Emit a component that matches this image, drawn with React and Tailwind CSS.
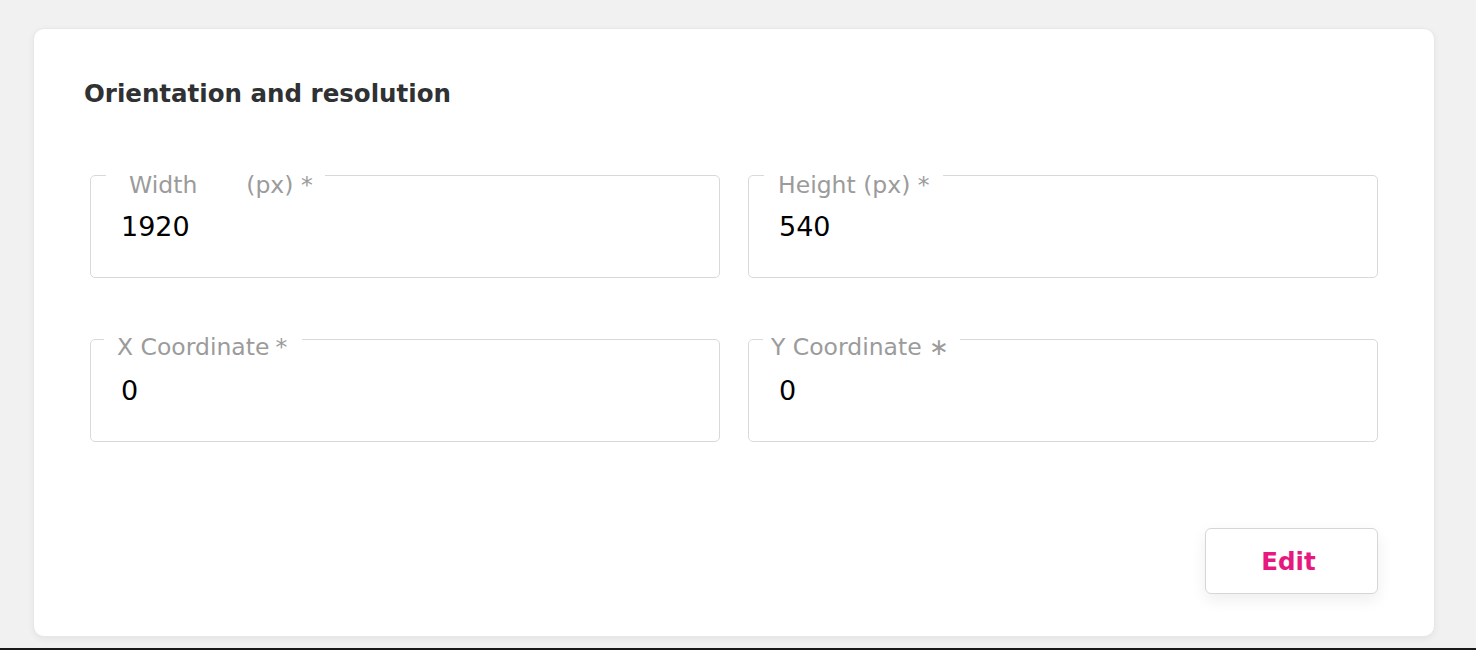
const Field = ({ label, value, legendClass }) => {
  return (
    <fieldset className="h-[124px] rounded-[5px] border border-[#d9d9d9] px-[30px] pb-0 pt-0 m-0 min-w-0">
      <legend className={`text-[23.5px] leading-[24px] text-[#9b9b9b] pt-[18px] ${legendClass}`}>
        {label}
      </legend>
      <div className="mt-[14px] text-[27px] leading-[34px] text-black">{value}</div>
    </fieldset>
  );
};

const App = () => {
  return (
    <div
      className="h-[650px] bg-[#f0f1f0] border-b-2 border-[#1a1a1a] pl-[33px] pr-[41px] pt-[28px]"
      style={{ fontFamily: '"DejaVu Sans", sans-serif' }}
    >
      <div className="h-[609px] rounded-[11px] bg-white border border-[#e8e8e8] shadow-[0_2px_6px_rgba(0,0,0,0.06)] pl-[50px] pr-[56px] pt-[50px]">
        <h2 className="text-[24.5px] leading-[30px] font-bold text-[#2f3133]">
          Orientation and resolution
        </h2>
        <div className="grid grid-cols-2 gap-x-[28px] gap-y-[40px] mt-[45px] pl-[6px]">
          <Field
            label={
              <span className="relative top-[1px]">
                Width<span className="inline-block w-[49px]" />(px) *
              </span>
            }
            value="1920"
            legendClass="ml-[-15px] pl-[23px] pr-[12px]"
          />
          <Field
            label={<span className="relative top-[1px]">Height (px) *</span>}
            value="540"
            legendClass="ml-[-15px] pl-[14px] pr-[13px]"
          />
          <Field
            label={
              <span className="relative -top-[1px]">
                X Coordinate<span className="ml-[6px]">*</span>
              </span>
            }
            value="0"
            legendClass="ml-[-17px] pl-[13px] pr-[15px]"
          />
          <Field
            label={<span className="relative -top-[1px]">Y Coordinate ∗</span>}
            value="0"
            legendClass="ml-[-16px] pl-[8px] pr-[11px]"
          />
        </div>
        <div className="flex justify-end mt-[86px]">
          <button className="w-[173px] h-[66px] rounded-[6px] border border-[#d6d6d6] bg-white shadow-[0_6px_16px_rgba(0,0,0,0.07)] pr-[6px] pt-[3px] text-[24.5px] font-bold text-[#e6197f]">
            Edit
          </button>
        </div>
      </div>
    </div>
  );
};

export default App;
